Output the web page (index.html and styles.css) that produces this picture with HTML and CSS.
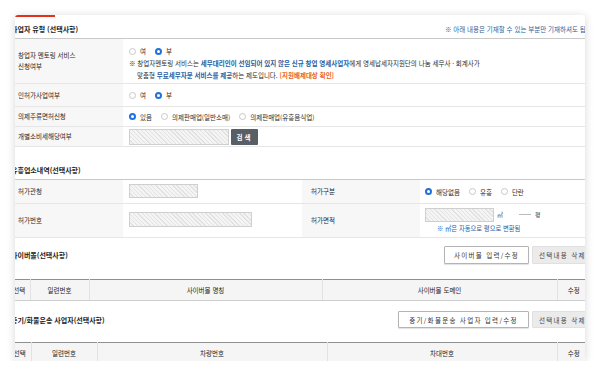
FILE: index.html
```html
<!DOCTYPE html>
<html lang="ko">
<head>
<meta charset="utf-8">
<link rel="stylesheet" href="styles.css">
</head>
<body>
<div class="card">
  <div class="inner">
    <div class="redbar"></div>
    <div class="head">
      <h2 class="title">사업자 유형 (선택사항)</h2>
      <p class="topnote">※ 아래 내용은 기재할 수 있는 부분만 기재하셔도 됩니다.</p>
    </div>

    <table class="form t1">
      <colgroup><col class="c-label"><col></colgroup>
      <tr class="r-mentor">
        <th>창업자 멘토링 서비스<br>신청여부</th>
        <td>
          <div class="radios">
            <label class="opt"><span class="radio"></span>여</label>
            <label class="opt"><span class="radio on"></span>부</label>
          </div>
          <p class="desc">※ 창업자멘토링 서비스는 <b class="blue">세무대리인이 선임되어 있지 않은 신규 창업 영세사업자</b>에게 영세납세자지원단의 나눔 세무사 · 회계사가</p>
          <p class="desc indent">맞춤형 <b class="blue">무료세무자문 서비스를 제공</b>하는 제도입니다. <b class="orange">[지원배제대상 확인]</b></p>
        </td>
      </tr>
      <tr class="r-23">
        <th>인허가사업여부</th>
        <td>
          <div class="radios">
            <label class="opt"><span class="radio"></span>여</label>
            <label class="opt"><span class="radio on"></span>부</label>
          </div>
        </td>
      </tr>
      <tr class="r-20">
        <th>의제주류면허신청</th>
        <td>
          <div class="radios">
            <label class="opt"><span class="radio on"></span>있음</label>
            <label class="opt"><span class="radio"></span>의제판매업(일반소매)</label>
            <label class="opt"><span class="radio"></span>의제판매업(유흥음식업)</label>
          </div>
        </td>
      </tr>
      <tr class="r-20">
        <th>개별소비세해당여부</th>
        <td>
          <div class="inline">
            <span class="field w100"></span>
            <button class="btn-dark">검색</button>
          </div>
        </td>
      </tr>
    </table>

    <h2 class="title sec">유흥업소내역(선택사항)</h2>
    <table class="form t2">
      <colgroup><col class="c-label"><col class="c-v1"><col class="c-l2"><col></colgroup>
      <tr class="r-24">
        <th>허가관청</th>
        <td><span class="field w69"></span></td>
        <th>허가구분</th>
        <td class="pad5">
          <div class="radios">
            <label class="opt"><span class="radio on"></span>해당없음</label>
            <label class="opt"><span class="radio"></span>유흥</label>
            <label class="opt"><span class="radio"></span>단란</label>
          </div>
        </td>
      </tr>
      <tr class="r-34">
        <th>허가번호</th>
        <td><span class="field w123"></span></td>
        <th>허가면적</th>
        <td class="pad5 area">
          <div class="inline">
            <span class="field w69 h14"></span>
            <span class="unit">㎡</span>
            <span class="dash"></span>
            <span class="unit">평</span>
          </div>
          <p class="desc blue small">※ ㎡은 자동으로 평으로 변환됨</p>
        </td>
      </tr>
    </table>

    <div class="bar bar3">
      <h2 class="title">사이버몰(선택사항)</h2>
      <div class="btns">
        <button class="btn">사이버몰 입력/수정</button>
        <button class="btn-gray">선택내용 삭제</button>
      </div>
    </div>
    <table class="list t3">
      <colgroup><col class="k1"><col class="k2"><col class="k3"><col class="k4"><col></colgroup>
      <tr><th>선택</th><th>일련번호</th><th>사이버몰 명칭</th><th>사이버몰 도메인</th><th>수정</th></tr>
    </table>

    <div class="bar bar4">
      <h2 class="title">중기/화물운송 사업자(선택사항)</h2>
      <div class="btns">
        <button class="btn">중기/화물운송 사업자 입력/수정</button>
        <button class="btn-gray">선택내용 삭제</button>
      </div>
    </div>
    <table class="list t4">
      <colgroup><col class="m1"><col class="m2"><col class="m3"><col class="m4"><col></colgroup>
      <tr><th>선택</th><th>일련번호</th><th>차량번호</th><th>차대번호</th><th>수정</th></tr>
    </table>
  </div>
</div>
</body>
</html>
```

FILE: styles.css
```css
* { box-sizing: border-box; }
html, body { margin: 0; padding: 0; background: #fff; }
body {
  font-family: "Noto Sans CJK KR", "Noto Sans", sans-serif;
  color: #2a2a2a;
  font-size: 6.5px;
}
.card {
  margin: 15px 0 0 15px;
  width: 570px;
  height: 346px;
  overflow: hidden;
  border-radius: 3px;
  background: #fff;
  box-shadow: 0 1px 9px rgba(0, 0, 0, 0.16);
}
.inner {
  margin-left: -6px;
  width: 581px;
}
.redbar {
  width: 46px;
  height: 2px;
  background: #e2321c;
}
.head {
  display: flex;
  align-items: center;
  height: 21px;
  padding-top: 3px;
}
.title {
  margin: 0;
  padding-left: 2px;
  font-size: 7px;
  font-weight: 700;
  color: #1e1e1e;
  white-space: nowrap;
  line-height: 10px;
}
.title.sec { margin: 18px 0 4px; }
.head .title { flex: 0 0 436px; }
.topnote {
  margin: 0;
  white-space: nowrap;
  color: #2d5e9c;
  font-size: 6.5px;
}
table { border-collapse: collapse; width: 100%; table-layout: fixed; }
.form { border-top: 1px solid #c9c9c9; }
.form th, .form td {
  border-bottom: 1px solid #e6e6e6;
  padding: 0;
  vertical-align: middle;
}
.form th {
  background: #f7f7f7;
  text-align: left;
  font-weight: 400;
  padding-left: 9px;
  line-height: 11px;
  color: #1e1e1e;
}
.form td { padding-left: 6px; }
.form td.pad5 { padding-left: 5px; }
.c-label { width: 114px; }
.c-v1 { width: 179px; }
.c-l2 { width: 118px; }
.r-mentor td { padding-top: 6px; padding-bottom: 2px; vertical-align: top; }
.r-mentor th { height: 45px; }
.r-23 th { height: 23px; }
.r-20 th { height: 20px; }
.r-24 th { height: 24px; }
.r-34 th { height: 34px; }

.radios { display: flex; align-items: center; gap: 9px; height: 12px; }
.opt { display: inline-flex; align-items: center; gap: 4px; white-space: nowrap; }
.radio {
  width: 7px; height: 7px; border-radius: 50%;
  border: 1px solid #c8c8c8; background: #fff; display: inline-block;
}
.radio.on { border: 2px solid #1f72db; }

.desc { margin: 0; line-height: 12px; white-space: nowrap; }
.indent { padding-left: 8px; }
.blue { color: #2b5d9f; }
.orange { color: #e8621a; }
b { font-weight: 700; }
.small { font-size: 6.3px; line-height: 10px; }
.area .desc { margin-left: 12px; margin-top: 2px; }

.inline { display: flex; align-items: center; gap: 2px; }
.field {
  display: inline-block;
  height: 16px;
  border: 1px solid #cfcfcf;
  background: repeating-linear-gradient(45deg, #f4f4f4 0, #f4f4f4 2px, #e2e2e2 2px, #e2e2e2 3px);
}
.w100 { width: 100px; }
.w69 { width: 69px; height: 14px; }
.w123 { width: 123px; height: 15px; }
.h14 { height: 14px; }
.btn-dark {
  width: 27px; height: 16px; border: 0; border-radius: 1px;
  background: #585e66; color: #fff; font: inherit; font-size: 6.5px;
  letter-spacing: 2px; padding: 0; font-weight: 700;
}
.unit { margin-left: 1px; color: #444; font-size: 6px; }
.dash { width: 12px; height: 1px; background: #bbb; margin: 0 1px 0 14px; }

.bar { display: flex; align-items: center; justify-content: space-between; }
.bar3 { margin-top: 8px; height: 18px; }
.bar4 { margin-top: 10px; height: 17px; }
.btns { display: flex; gap: 3px; height: 100%; }
.btn {
  font: inherit; font-size: 6.5px; letter-spacing: 1.3px;
  background: #fff; color: #333;
  border: 1px solid #b4b4b4; border-radius: 1px;
  box-shadow: 0 1px 1px rgba(0,0,0,0.12);
  padding: 0 8px;
}
.bar3 .btn { width: 85px; }
.bar4 .btn { width: 131px; }
.btn-gray {
  font: inherit; font-size: 6.5px; letter-spacing: 1.3px;
  background: #ebebeb; color: #444;
  border: 1px solid #e0e0e0; border-radius: 1px;
  width: 58px; padding: 0 6px; white-space: nowrap;
}

.list { border-top: 1px solid #8f8f8f; }
.list th {
  height: 21px; padding: 0;
  background: #f5f5f5;
  border-bottom: 1px solid #cfcfcf;
  border-left: 1px solid #e2e2e2;
  font-weight: 400; color: #222; text-align: center;
}
.list th:first-child { border-left: 0; }
.t3 { margin-top: 15px; }
.t4 { margin-top: 14px; }
.k1 { width: 21px; } .k2 { width: 59px; } .k3 { width: 233px; } .k4 { width: 235px; }
.m1 { width: 22px; } .m2 { width: 66px; } .m3 { width: 230px; } .m4 { width: 230px; }
```
